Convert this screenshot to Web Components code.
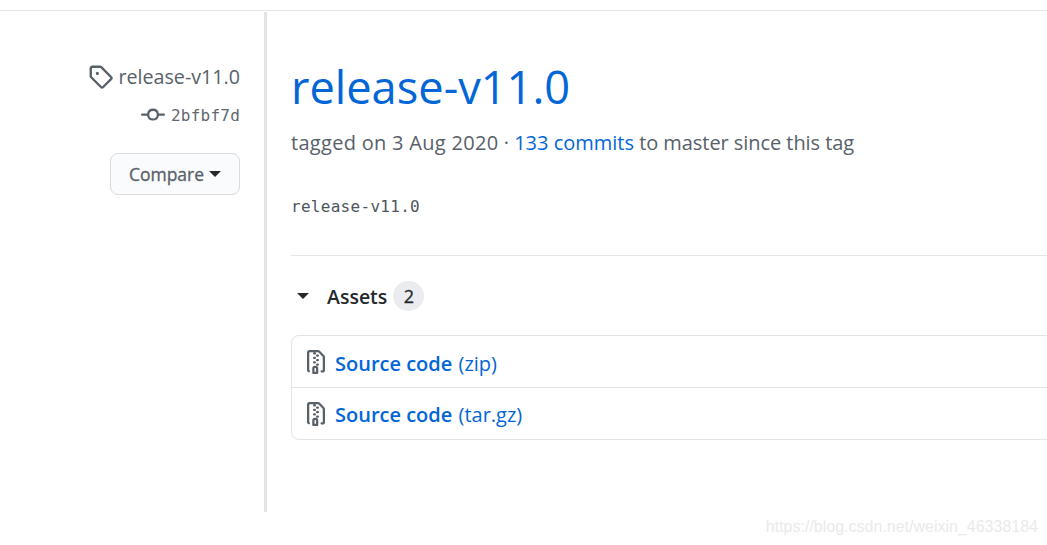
<!DOCTYPE html>
<html>
<head>
<meta charset="utf-8">
<title>release-v11.0</title>
<style>
  html, body { margin: 0; background: #fff; }
  body { font-family: "Open Sans", "Liberation Sans", sans-serif; height: 545px; overflow: hidden; }
</style>
</head>
<body>
<release-page>
  <release-side slot="side" tag="release-v11.0" commit="2bfbf7d"></release-side>
  <release-head tag="release-v11.0" date="3 Aug 2020" commits="133"></release-head>
  <release-assets count="2">
    <asset-row name="(zip)"></asset-row>
    <asset-row name="(tar.gz)"></asset-row>
  </release-assets>
</release-page>
<water-mark>https://blog.csdn.net/weixin_46338184</water-mark>

<script>
// octicon paths, 16 grid
const ICONS = {
  tag: 'M2.5 7.775V2.75a.25.25 0 01.25-.25h5.025a.25.25 0 01.177.073l6.25 6.25a.25.25 0 010 .354l-5.025 5.025a.25.25 0 01-.354 0l-6.25-6.25a.25.25 0 01-.073-.177zm-1.5 0V2.75C1 1.784 1.784 1 2.75 1h5.025c.464 0 .91.184 1.238.513l6.25 6.25a1.75 1.75 0 010 2.474l-5.026 5.026a1.75 1.75 0 01-2.474 0l-6.25-6.25A1.75 1.75 0 011 7.775zM6 5a1 1 0 100 2 1 1 0 000-2z',
  commit: 'M10.5 7.75a2.5 2.5 0 11-5 0 2.5 2.5 0 015 0zm1.43.75a4.002 4.002 0 01-7.86 0H.75a.75.75 0 110-1.5h3.32a4.001 4.001 0 017.86 0h3.32a.75.75 0 110 1.5h-3.32z',
  zip: 'M3.5 1.75a.25.25 0 01.25-.25h3a.75.75 0 000 1.5h.5a.75.75 0 000-1.5h2.086a.25.25 0 01.177.073l2.914 2.914a.25.25 0 01.073.177v8.586a.25.25 0 01-.25.25h-.5a.75.75 0 000 1.5h.5A1.75 1.75 0 0014 13.25V4.664c0-.464-.184-.909-.513-1.237L10.573.513A1.75 1.75 0 009.336 0H3.75A1.75 1.75 0 002 1.75v11.5c0 .649.353 1.214.874 1.515a.75.75 0 10.752-1.298.25.25 0 01-.126-.217V1.75zM8.75 3a.75.75 0 000 1.5h.5a.75.75 0 000-1.5h-.5zM6 5.25a.75.75 0 01.75-.75h.5a.75.75 0 010 1.5h-.5A.75.75 0 016 5.25zm2 1.5A.75.75 0 018.75 6h.5a.75.75 0 010 1.5h-.5A.75.75 0 018 6.75zm-1.25.75a.75.75 0 000 1.5h.5a.75.75 0 000-1.5h-.5zM8 9.75A.75.75 0 018.75 9h.5a.75.75 0 010 1.5h-.5A.75.75 0 018 9.75zm-.75.75a1.75 1.75 0 00-1.75 1.75v3c0 .414.336.75.75.75h2.5a.75.75 0 00.75-.75v-3a1.75 1.75 0 00-1.75-1.75h-.5zM7 12.25a.25.25 0 01.25-.25h.5a.25.25 0 01.25.25v2.25H7v-2.25z'
};

function icon(name, size) {
  return `<svg width="${size}" height="${size}" viewBox="0 0 16 16" fill="#586069"><path fill-rule="evenodd" d="${ICONS[name]}"></path></svg>`;
}

class ReleasePage extends HTMLElement {
  constructor() {
    super();
    this.attachShadow({ mode: 'open' });
    this.shadowRoot.innerHTML = `
      <style>
        :host { display: block; }
        .top { height: 10px; border-bottom: 1px solid #e4e6e8; }
        .wrap { display: flex; height: 500px; margin-top: 1px; }
        .side { width: 264px; flex: none; border-right: 3px solid #e1e4e8; box-sizing: content-box; }
        .main { flex: 1; min-width: 0; padding-left: 24px; }
      </style>
      <div class="top"></div>
      <div class="wrap">
        <div class="side"><slot name="side"></slot></div>
        <div class="main"><slot></slot></div>
      </div>
    `;
  }
}

class ReleaseSide extends HTMLElement {
  constructor() {
    super();
    this.attachShadow({ mode: 'open' });
  }

  connectedCallback() {
    this.shadowRoot.innerHTML = `
      <style>
        :host { display: flex; flex-direction: column; align-items: flex-end; padding: 51px 24px 0 0; }
        .tag { display: flex; align-items: center; gap: 5px; height: 26px; font-size: 19.7px; color: #586069; }
        .commit { display: flex; align-items: center; gap: 6px; height: 24px; margin-top: 14px; font: 16px "DejaVu Sans Mono", monospace; letter-spacing: 0.23px; color: #5f676f; }
        .btn { display: flex; align-items: center; gap: 5px; box-sizing: border-box; width: 130px; height: 42px; margin-top: 26px; justify-content: center;
          border: 1px solid #d9dbdd; border-radius: 8px; background: #fafbfc; font-size: 17.5px; -webkit-text-stroke: 0.3px #586069; color: #586069; }
        .caret { width: 0; height: 0; border: 6px solid transparent; border-top-color: #24292e; border-bottom: 0; }
      </style>
      <div class="tag">${icon('tag', 25)}<span>${this.getAttribute('tag')}</span></div>
      <div class="commit">${icon('commit', 24)}<span>${this.getAttribute('commit')}</span></div>
      <div class="btn"><span>Compare</span><i class="caret"></i></div>
    `;
  }
}

class ReleaseHead extends HTMLElement {
  constructor() {
    super();
    this.attachShadow({ mode: 'open' });
  }

  connectedCallback() {
    this.shadowRoot.innerHTML = `
      <style>
        :host { display: block; padding-top: 40px; }
        h1 { margin: 0; height: 70px; line-height: 70px; font-size: 45.2px; font-weight: 400; color: #0366d6; }
        .meta { height: 30px; line-height: 30px; margin-top: 6px; font-size: 20px; color: #586069; }
        .date { letter-spacing: 0.3px; }
        .rest { letter-spacing: -0.06px; }
        a { color: #0366d6; text-decoration: none; }
        .body { height: 24px; margin-top: 37px; font: 16px/24px "DejaVu Sans Mono", monospace; letter-spacing: 0.29px; color: #4d555d; }
        hr { height: 1px; border: 0; background: #e4e6e8; margin: 36px 0 0; }
      </style>
      <h1>${this.getAttribute('tag')}</h1>
      <div class="meta"><span class="date">tagged on ${this.getAttribute('date')}</span> · <a>${this.getAttribute('commits')} commits</a> <span class="rest">to master since this tag</span></div>
      <div class="body">${this.getAttribute('tag')}</div>
      <hr>
    `;
  }
}

class ReleaseAssets extends HTMLElement {
  constructor() {
    super();
    this.attachShadow({ mode: 'open' });
  }

  connectedCallback() {
    this.shadowRoot.innerHTML = `
      <style>
        :host { display: block; }
        .head { display: flex; align-items: center; height: 30px; margin-top: 25px; }
        .caret { width: 0; height: 0; margin-left: 6px; border: 6px solid transparent; border-top-color: #24292e; border-bottom: 0; }
        .title { margin-left: 18px; font-size: 19.5px; font-weight: 600; color: #24292e; }
        .count { display: flex; align-items: center; justify-content: center; width: 31px; height: 30px; margin-left: 6px; border-radius: 15px; background: #eaecef; font-size: 18px; -webkit-text-stroke: 0.3px #24292e; color: #24292e; }
        .list { margin-top: 24px; margin-right: -6px; border: 1px solid #e1e4e8; border-radius: 8px; }
      </style>
      <div class="head"><i class="caret"></i><span class="title">Assets</span><span class="count">${this.getAttribute('count')}</span></div>
      <div class="list"><slot></slot></div>
    `;
  }
}

class AssetRow extends HTMLElement {
  constructor() {
    super();
    this.attachShadow({ mode: 'open' });
  }

  connectedCallback() {
    this.shadowRoot.innerHTML = `
      <style>
        :host { display: flex; align-items: center; gap: 7px; height: 51px; padding-left: 12px; color: #0366d6; font-size: 20px; }
        :host(:not(:first-child)) { border-top: 1px solid #e1e4e8; }
        :host(:first-child) span { padding-top: 3px; }
        :host(:not(:first-child)) span { padding-top: 1px; }
        b { font-weight: 600; margin-right: 1px; }
      </style>
      ${icon('zip', 24)}<span><b>Source code</b> ${this.getAttribute('name')}</span>
    `;
  }
}

class WaterMark extends HTMLElement {
  constructor() {
    super();
    this.attachShadow({ mode: 'open' });
    this.shadowRoot.innerHTML = `
      <style>
        :host { position: absolute; right: 9px; top: 516px; font: 16px/21px "Liberation Sans", sans-serif; color: #eaeaea; }
      </style>
      <slot></slot>
    `;
  }
}

customElements.define('release-page', ReleasePage);
customElements.define('release-side', ReleaseSide);
customElements.define('release-head', ReleaseHead);
customElements.define('release-assets', ReleaseAssets);
customElements.define('asset-row', AssetRow);
customElements.define('water-mark', WaterMark);
</script>
</body>
</html>
